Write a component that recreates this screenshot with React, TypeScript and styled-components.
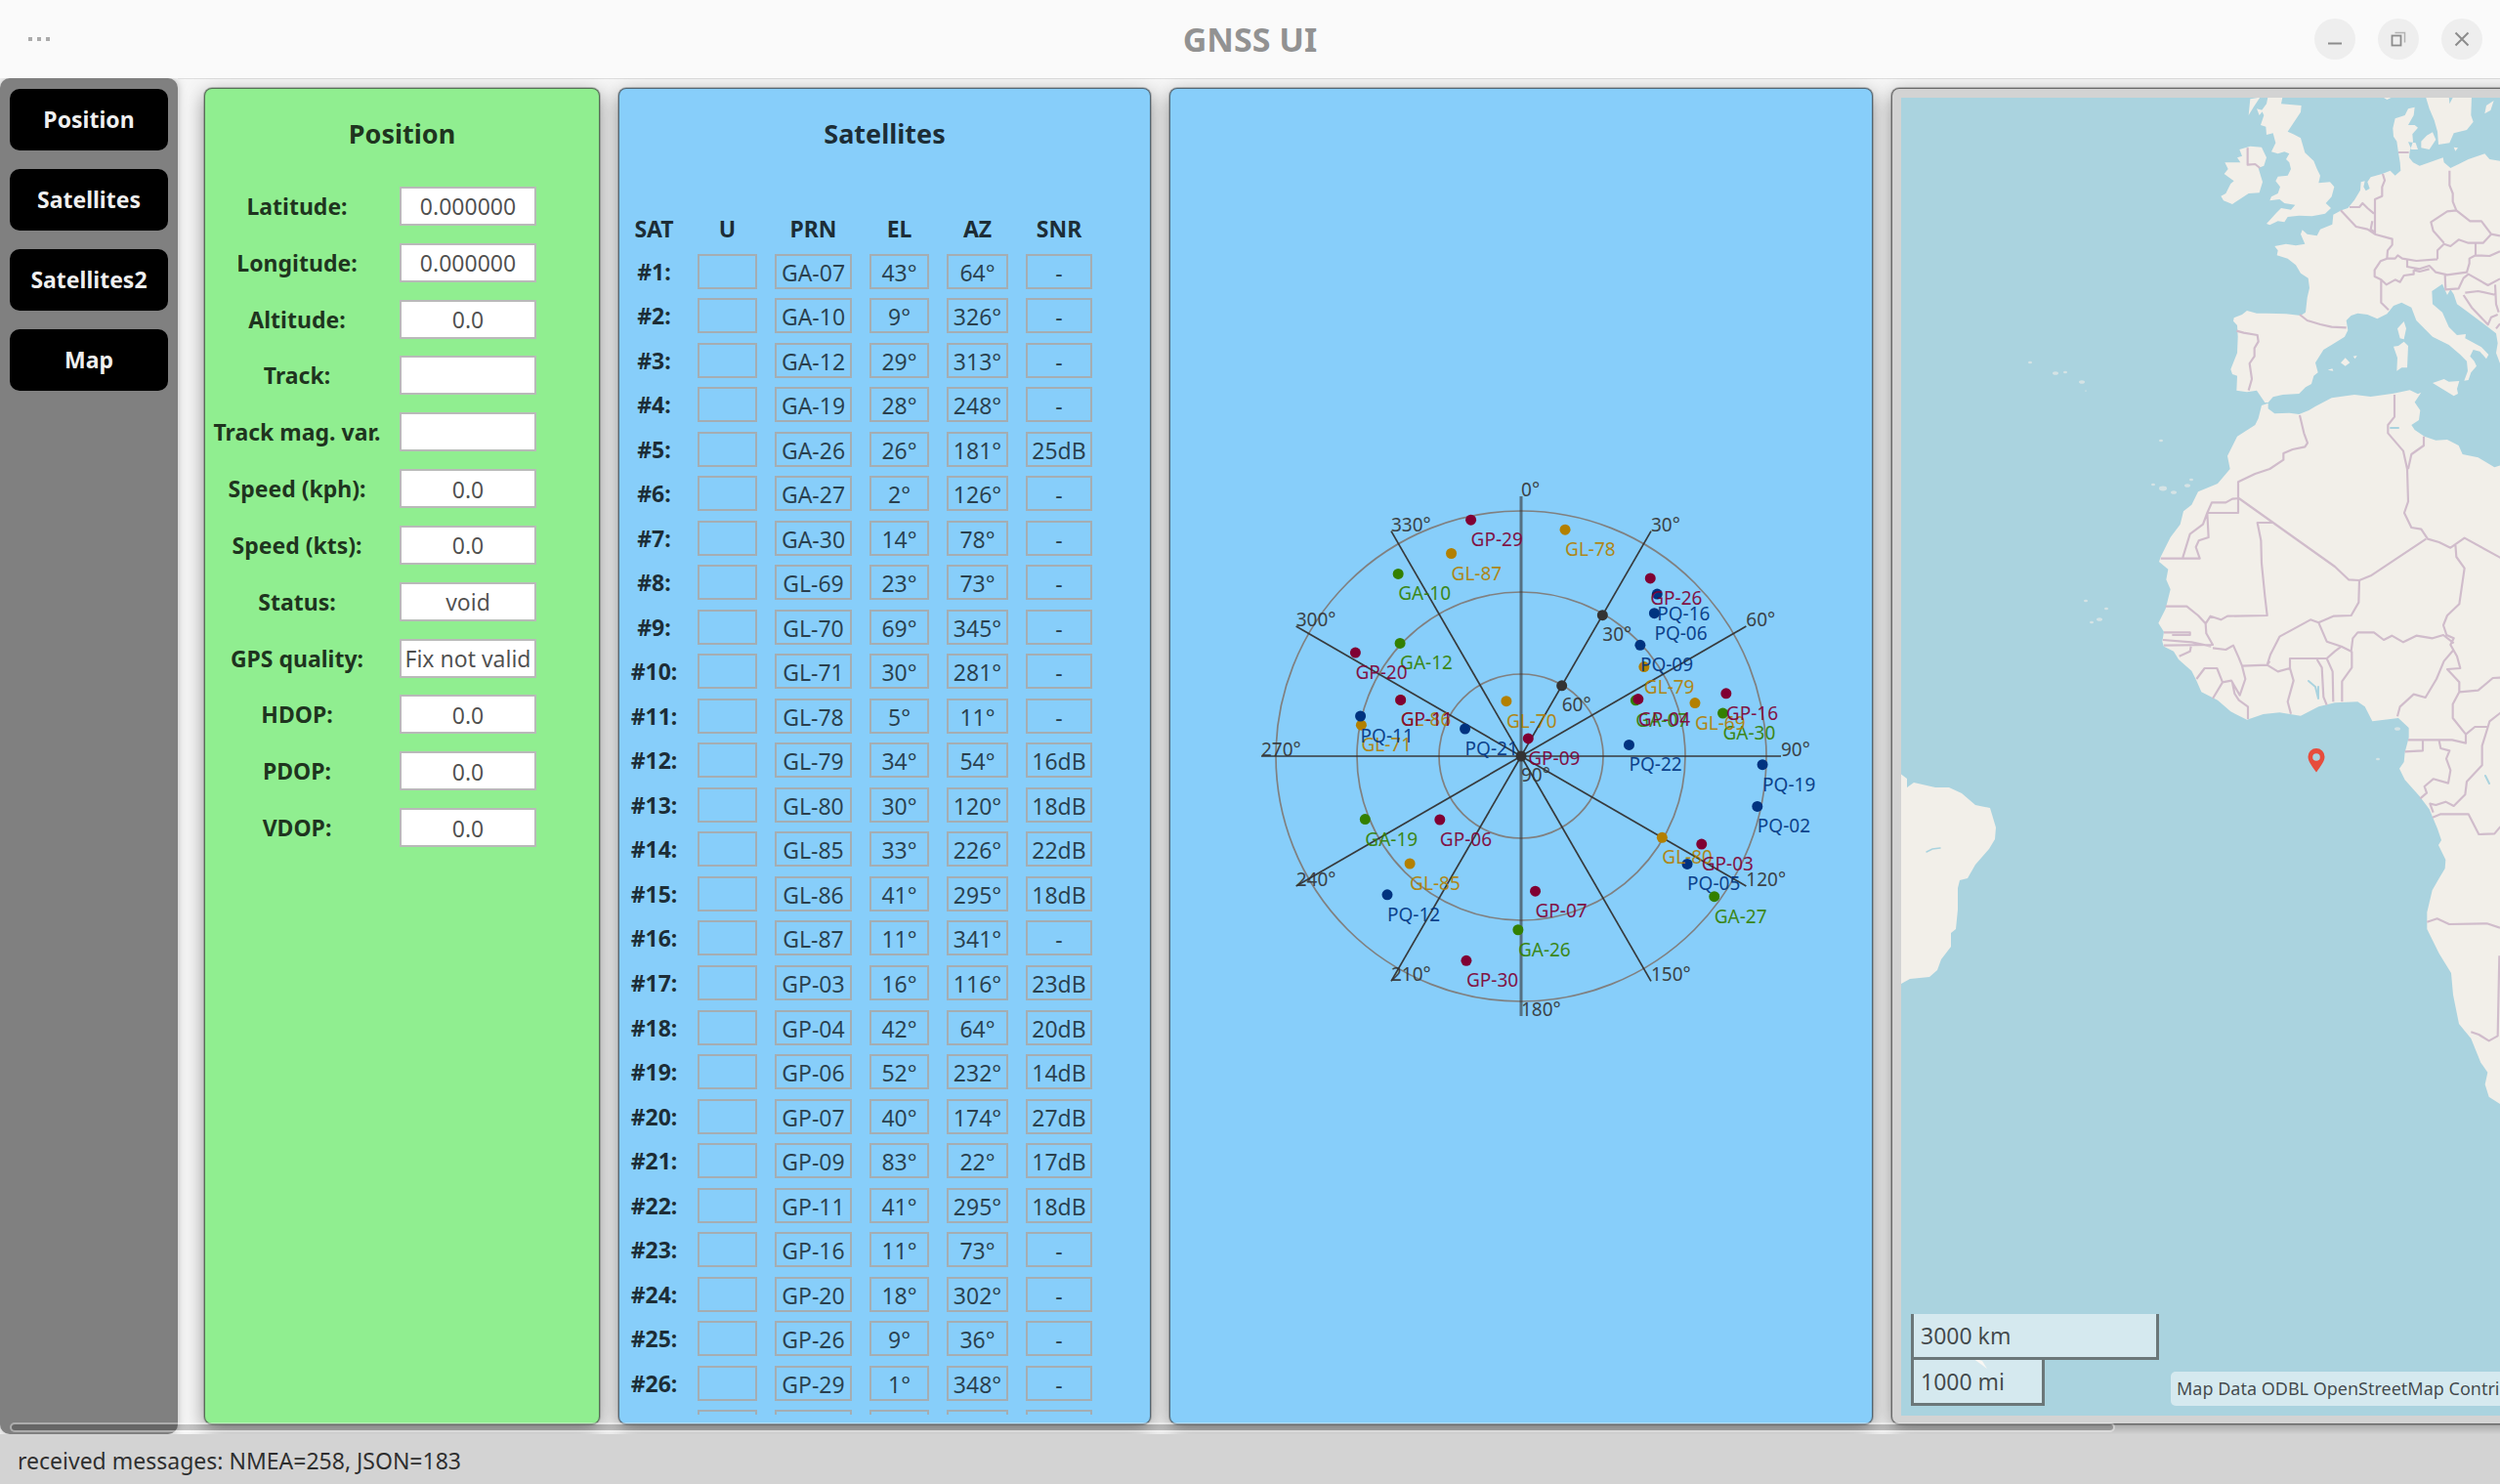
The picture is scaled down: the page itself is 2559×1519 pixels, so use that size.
import React from "react";
import styled, { createGlobalStyle, css } from "styled-components";

const GlobalStyle = createGlobalStyle`
  *, *::before, *::after { box-sizing: border-box; }
  html, body { margin: 0; padding: 0; overflow: hidden; background: #f6f6f6; }
  body, button, input { font-family: "Noto Sans", "Open Sans", sans-serif; }
`;

/* ---------- data ---------- */

type Sat = { prn: string; el: number; az: number; snr?: number };

const sat = (prn: string, el: number, az: number, snr?: number): Sat => ({ prn, el, az, snr });

const satellites: Sat[] = [
  sat("GA-07", 43, 64), sat("GA-10", 9, 326), sat("GA-12", 29, 313), sat("GA-19", 28, 248),
  sat("GA-26", 26, 181, 25), sat("GA-27", 2, 126), sat("GA-30", 14, 78),
  sat("GL-69", 23, 73), sat("GL-70", 69, 345), sat("GL-71", 30, 281), sat("GL-78", 5, 11),
  sat("GL-79", 34, 54, 16), sat("GL-80", 30, 120, 18), sat("GL-85", 33, 226, 22),
  sat("GL-86", 41, 295, 18), sat("GL-87", 11, 341),
  sat("GP-03", 16, 116, 23), sat("GP-04", 42, 64, 20), sat("GP-06", 52, 232, 14),
  sat("GP-07", 40, 174, 27), sat("GP-09", 83, 22, 17), sat("GP-11", 41, 295, 18),
  sat("GP-16", 11, 73), sat("GP-20", 18, 302), sat("GP-26", 9, 36), sat("GP-29", 1, 348),
  sat("GP-30", 12, 195),
  sat("PQ-02", 1, 102), sat("PQ-05", 17, 123), sat("PQ-06", 18, 43), sat("PQ-09", 30, 47),
  sat("PQ-11", 29, 284), sat("PQ-12", 19, 224), sat("PQ-16", 12, 40), sat("PQ-19", 1, 92),
  sat("PQ-21", 67, 296), sat("PQ-22", 50, 84),
];

const VISIBLE_ROWS = 27;

const positionFields: [string, string][] = [
  ["Latitude:", "0.000000"],
  ["Longitude:", "0.000000"],
  ["Altitude:", "0.0"],
  ["Track:", ""],
  ["Track mag. var.", ""],
  ["Speed (kph):", "0.0"],
  ["Speed (kts):", "0.0"],
  ["Status:", "void"],
  ["GPS quality:", "Fix not valid"],
  ["HDOP:", "0.0"],
  ["PDOP:", "0.0"],
  ["VDOP:", "0.0"],
];

/* ---------- window frame ---------- */

const Window = styled.div`
  display: flex;
  flex-direction: column;
  height: 100vh;
  overflow: hidden;
  color: rgba(0, 0, 0, 0.8);
  font-size: 23px;
`;

const TitleBar = styled.header`
  flex: none;
  display: grid;
  grid-template-columns: 1fr auto 1fr;
  align-items: center;
  height: 80px;
  padding: 0 18px;
  background: #fafafa;
`;

const Title = styled.h1`
  margin: 0;
  font-size: 34px;
  line-height: 40px;
  font-weight: 700;
  color: #929292;
`;

const MenuButton = styled.button`
  justify-self: start;
  display: flex;
  align-items: center;
  justify-content: center;
  width: 44px;
  height: 44px;
  padding: 0;
  border: 0;
  background: none;
`;

const WindowControls = styled.div`
  justify-self: end;
  display: flex;
  gap: 23px;
`;

const ControlButton = styled.button`
  display: flex;
  align-items: center;
  justify-content: center;
  width: 42px;
  height: 42px;
  padding: 0;
  border: 0;
  border-radius: 50%;
  background: #eeeeee;
`;

const Body = styled.main`
  position: relative;
  flex: 1;
  min-height: 0;
  display: flex;
  overflow: hidden;
  background: #f6f6f6;
`;

const StatusBar = styled.footer`
  flex: none;
  display: flex;
  align-items: center;
  height: 51px;
  padding: 2px 18px 0;
  background: #d3d3d3;
  line-height: 32px;
`;

const Sidebar = styled.nav`
  flex: none;
  display: flex;
  flex-direction: column;
  gap: 19px;
  width: 182px;
  padding: 11px 10px;
  border-radius: 10px;
  background: #808080;
  box-shadow: 0 0 10px rgba(0, 0, 0, 0.25);
`;

const NavButton = styled.button`
  height: 63px;
  padding: 0 0 2px;
  border: 0;
  border-radius: 10px;
  background: #000;
  color: rgba(255, 255, 255, 0.95);
  font-size: 23px;
  font-weight: 700;
`;

const Panels = styled.div`
  flex: 1;
  min-width: 0;
  display: flex;
  gap: 19px;
  padding: 9px 0 10px 27px;
  border-top: 1px solid #dedede;
`;

const ScrollThumb = styled.div`
  position: absolute;
  left: 10px;
  bottom: 2px;
  width: 84.2%;
  height: 10px;
  border: 2px solid rgba(255, 255, 255, 0.35);
  border-radius: 5px;
  background: rgba(0, 0, 0, 0.2);
  background-clip: padding-box;
`;

const Panel = styled.section<{ $width: number; $tone: string }>`
  flex: none;
  display: flex;
  flex-direction: column;
  width: ${(p) => p.$width}px;
  border: 1px solid rgba(60, 60, 60, 0.7);
  border-radius: 8px;
  background: ${(p) => p.$tone};
  box-shadow: 0 0 0 1px rgba(0, 0, 0, 0.2), 0 6px 20px rgba(0, 0, 0, 0.42);
`;

const PanelTitle = styled.h2`
  margin: 26px 0 0;
  font-size: 27px;
  line-height: 40px;
  font-weight: 700;
  text-align: center;
`;

/* ---------- position panel ---------- */

const FieldList = styled.div`
  display: grid;
  grid-template-columns: 174px 140px;
  column-gap: 18px;
  grid-auto-rows: 1fr;
  align-items: center;
  height: 694px;
  margin: 25px 0 0 7px;
`;

const FieldLabel = styled.label`
  font-weight: 700;
  line-height: 32px;
  text-align: center;
  white-space: nowrap;
`;

const FieldInput = styled.input`
  width: 100%;
  height: 40px;
  padding: 1px 0 0;
  border: 2px solid #b9b9b9;
  background: #fff;
  color: rgba(0, 0, 0, 0.7);
  font-size: 23px;
  text-align: center;
`;

/* ---------- satellite table ---------- */

const TableClip = styled.div`
  flex: 1;
  min-height: 0;
  margin: 55px 0 9px;
  overflow: hidden;
`;

const SatTable = styled.table`
  table-layout: fixed;
  width: 493px;
  height: 1272px;
  border-collapse: collapse;
`;

const HeadCell = styled.th<{ $width: number }>`
  width: ${(p) => p.$width}px;
  height: 43px;
  padding: 0;
  line-height: 32px;
  font-weight: 700;
`;

const RowHead = styled.th`
  padding: 0;
  line-height: 32px;
  font-weight: 700;
`;

const Cell = styled.td`
  padding: 0 9px;
`;

const CellBox = styled.div`
  height: 36px;
  border: 2px solid #a5adb2;
  color: rgba(0, 0, 0, 0.7);
  line-height: 34px;
  text-align: center;
  white-space: nowrap;
`;

/* ---------- sky plot ---------- */

const PlotArea = styled.div`
  flex: 1;
  display: flex;
  align-items: center;
  justify-content: center;
`;

const plotText = css`
  font-family: "Noto Sans", "Open Sans", sans-serif;
  font-size: 19px;
`;

const Plot = styled.svg`
  width: 640px;
  height: 600px;
  text { ${plotText} }
`;

const PLOT_RADIUS = 250;
const AXIS_LENGTH = 266;
const constellationColor: Record<string, string> = {
  GA: "#338000",
  GL: "#b38000",
  GP: "#800033",
  PQ: "#003380",
};

const polar = (radius: number, azimuth: number) => {
  const a = (azimuth * Math.PI) / 180;
  return { x: radius * Math.sin(a), y: -radius * Math.cos(a) };
};
const place = (el: number, az: number) => polar(((90 - el) / 90) * PLOT_RADIUS, az);

function SkyPlot() {
  const azimuths = Array.from({ length: 12 }, (_, i) => i * 30);
  return (
    <Plot viewBox="-320 -300 640 600" role="img" aria-label="Sky plot">
      {[84, 168, 251].map((r) => (
        <circle key={r} r={r} fill="none" stroke="#808080" strokeWidth="1.7" />
      ))}
      {azimuths.map((az) => {
        const p = polar(AXIS_LENGTH, az);
        const vertical = az % 180 === 0;
        return (
          <g key={az}>
            <line
              x2={p.x}
              y2={p.y}
              stroke="#333"
              strokeWidth={vertical ? 3 : 1.7}
              opacity={vertical ? 0.6 : 0.95}
            />
            <text x={p.x} y={p.y} fill="#333" opacity="0.9">{az}°</text>
          </g>
        );
      })}
      {[30, 60, 90].map((el) => {
        const p = place(el, 30);
        return (
          <g key={el} fill="#333">
            <circle cx={p.x} cy={p.y} r="5.5" />
            <text x={p.x} y={p.y + 26} opacity="0.9">{el}°</text>
          </g>
        );
      })}
      {satellites.map((s) => {
        const p = place(s.el, s.az);
        return <circle key={s.prn} cx={p.x} cy={p.y} r="5.5" fill={constellationColor[s.prn.slice(0, 2)]} />;
      })}
      {satellites.map((s) => {
        const p = place(s.el, s.az);
        return (
          <text key={s.prn} x={p.x} y={p.y + 27} fill={constellationColor[s.prn.slice(0, 2)]} opacity="0.9">
            {s.prn}
          </text>
        );
      })}
    </Plot>
  );
}

/* ---------- map ---------- */

const MapFrame = styled(Panel)`
  padding: 9px 9px 8px;
`;

const MapView = styled.div`
  position: relative;
  flex: 1;
  display: flex;
  align-items: flex-end;
  overflow: hidden;
  background: #aad3df;
`;

const MapDrawing = styled.svg`
  position: absolute;
  top: 0;
  left: 0;
  width: 850px;
  height: 1350px;
`;

const MapOverlay = styled.div`
  position: relative;
  display: flex;
  align-items: flex-end;
  gap: 12px;
  padding: 0 10px 10px;
`;

const Scale = styled.div`
  display: flex;
  flex-direction: column;
  align-items: flex-start;
  width: 254px;
`;

const ScaleBar = styled.div<{ $width: number }>`
  width: ${(p) => p.$width}px;
  height: 47px;
  padding: 5px 7px 0;
  border: 3px solid #6b7779;
  border-top: 0;
  background: rgba(255, 255, 255, 0.5);
  color: rgba(0, 0, 0, 0.7);
  font-size: 23px;
  line-height: 34px;
`;

const Attribution = styled.div`
  height: 35px;
  padding: 0 6px;
  border-radius: 5px;
  background: rgba(255, 255, 255, 0.5);
  color: rgba(0, 0, 0, 0.7);
  font-size: 18px;
  line-height: 35px;
  white-space: nowrap;
`;

const europeLand = [
  "M1200,200 897,200 865,195 850,178 800,195 770,210 745,222 725,205 722,190 680,205 650,215 630,205 618,190 620,170 630,140 628,118 645,98 635,90 615,90 632,60 635,35 615,40 605,60 575,70 568,100 570,125 580,140 585,175 590,205 592,230 575,245 560,230 535,240 500,250 490,265 497,285 485,292 478,280 482,262 470,265 468,290 450,320 430,345 410,352 385,365 382,395 345,410 335,430 305,425 290,412 285,425 298,455 270,460 240,455 205,462 215,475 212,490 245,500 270,520 285,545 308,560 312,590 305,620 300,665 285,675 240,670 180,668 150,668 120,660 105,672 80,682 78,692 90,705 92,740 90,790 70,840 75,855 90,860 88,905 120,910 150,905 175,942 185,942 200,925 230,918 280,915 300,895 318,885 325,860 338,850 330,820 355,780 380,765 420,740 430,720 425,690 440,675 460,668 490,672 520,685 550,670 570,645 595,635 625,650 640,690 690,740 740,765 775,795 795,815 798,845 787,875 800,873 808,850 825,830 818,815 805,800 815,780 835,785 855,808 862,795 840,772 790,745 792,732 765,735 740,710 720,665 690,640 688,600 720,578 735,612 745,595 755,610 765,640 800,665 860,710 885,730 890,760 885,790 900,830 1200,830Z",
  "M185,0 230,0 225,25 287,30 285,50 265,80 245,110 262,118 285,130 298,175 325,200 335,225 345,245 340,268 375,265 388,280 380,310 362,330 378,345 360,362 320,370 280,368 245,372 235,388 215,385 190,397 180,393 210,360 225,345 255,350 268,335 235,330 220,318 190,322 195,310 215,300 222,280 208,262 215,248 245,245 255,225 250,205 240,195 250,178 235,172 215,178 195,172 208,145 200,115 180,120 178,95 162,90 172,60 165,45 180,25Z",
  "M97,165 130,155 165,158 180,190 172,215 155,222 168,265 158,298 125,300 75,333 48,322 40,308 55,300 70,270 80,262 50,240 62,225 52,205 100,205 90,190 105,185Z",
  "M668,0 740,0 742,25 755,0 810,0 808,60 815,80 795,105 755,115 742,145 708,150 705,110 695,75 680,40Z",
  "M655,140 672,122 690,112 700,135 680,165 655,160Z",
  "M615,142 638,145 645,165 625,165Z",
  "M850,55 855,30 878,15 868,45Z",
  "M582,715 602,693 609,715 602,748 590,745Z",
  "M570,770 585,768 602,755 615,768 612,835 595,835 580,845 582,805Z",
  "M690,882 725,870 740,878 772,876 765,900 768,915 755,922Z",
  "M408,820 422,805 436,820 422,830Z",
  "M530,0 575,0 550,12Z",
  "M130,10 160,5 140,35 125,60ZM150,40 170,45 158,60Z",
  "M755,158 768,160 760,170Z",
  "M368,842 382,838 385,845ZM446,800 458,798 452,808Z",
].join("");

const europeBorders = [
  "M122,160 122,212 145,210 160,222",
  "M585,174 617,174",
  "M742,230 742,275 752,300 752,325 763,352",
  "M537,240 543,260 535,280 535,308 513,318 513,422",
  "M435,342 465,342 475,330 490,345 510,362M505,385 500,410 515,422",
  "M408,352 455,402 490,410 515,426 566,440 566,458 552,475 550,500",
  "M550,500 575,500 583,490 597,500 640,507 705,502M550,500 530,508 512,535 512,555 532,565 548,580 575,565 590,572 602,552 632,548 632,535",
  "M612,502 612,525 650,532 680,522 700,542 735,550 795,542 803,515 803,500 822,490",
  "M705,502 705,475 725,455 745,462 770,442 800,452 845,452 870,425 840,385 805,385 763,352 735,355 685,388 692,415 725,452",
  "M632,535 650,540 680,532M870,425 897,430M822,455 822,490 865,492 897,478",
  "M532,565 532,635 555,658M728,550 730,595 770,592 785,560 800,548 860,582 897,562",
  "M790,605 830,600 885,612M785,612 810,650 860,703 870,680 890,672M882,580 885,640 893,665M897,700 885,715",
  "M282,672 305,690 345,702 380,710 425,712M88,722 110,728 152,735 155,755 143,775 143,800 128,822 135,870 125,905",
].join("");

const africaLand =
  "M345,45 335,85 325,105 270,140 240,200 248,240 210,285 150,310 130,350 105,370 95,410 65,450 35,510 30,525 58,548 52,580 65,610 50,670 28,713 45,740 40,770 45,785 75,800 90,825 130,860 145,890 160,925 210,950 250,985 300,1010 350,993 400,988 465,998 520,970 570,958 640,955 662,970 685,1015 765,1005 797,1035 797,1065 785,1110 782,1140 768,1160 785,1195 830,1245 860,1285 885,1345 897,1380 888,1395 910,1440 908,1467 890,1497 869,1534 853,1601 853,1653 890,1728 927,1788 933,1855 951,1944 988,1989 1018,2063 1039,2093 1031,2130 1043,2168 1077,2190 1200,2240 1700,2240 1700,225 1090,225 1060,235 1010,205 962,195 950,168 915,150 880,152 845,140 815,120 805,105 828,90 832,60 815,35 835,5 825,10 800,-2 750,8 680,18 630,12 560,22 510,48 490,60 460,72 430,68 385,70 365,55 365,38Z";

const africaBorders = [
  "M462,75 475,130 486,160 478,172 440,180 412,192 412,212 370,240 325,255 273,280 273,375 178,375",
  "M273,330 255,332 235,343 192,343 178,375 165,410 125,440 103,512M178,375 182,450 152,460 143,480 155,515 35,515",
  "M275,330 570,540 612,580 645,582 680,568 850,455",
  "M380,405 332,405 343,460 345,530 355,630 362,690 240,692 220,703 188,692 173,715",
  "M645,582 643,650 620,690 565,692 520,712 495,703 400,755 372,810 362,842",
  "M753,12 753,80 733,105 733,130 780,185 792,240 795,340 783,375 805,420 835,425 855,455 890,465 925,482 968,452 1077,512 1200,560",
  "M843,140 843,168 805,195 795,240",
  "M940,472 943,510 968,545 952,655 915,690 903,720 913,750 935,760 925,780 945,815 955,852 915,855 952,895 952,925 1010,920 1055,882 1100,880",
  "M50,662 115,662 150,690 173,715 175,745 195,780 45,782M45,742 125,742 125,750 70,750M42,765 130,772 190,785",
  "M128,785 125,800 92,815M195,790 235,795 258,782 275,820 285,845 295,885 278,935 252,890 225,895 195,945M145,885 170,852 208,852 225,895",
  "M285,845 362,842 395,862 432,852 443,890 425,955 435,992M362,842 370,830M255,895 262,930 275,950 303,970 303,1008",
  "M432,855 432,822 545,822 570,800 590,785 545,770 520,712M515,825 530,850 535,940 545,965M545,822 563,862 565,955",
  "M590,785 620,800 625,760 640,742 690,742 720,765 745,752 780,772 820,752 870,760 903,750 935,775M622,800 622,850 592,892 592,955",
  "M935,795 905,830 882,885 848,942 812,932 770,970 762,1000",
  "M952,925 932,962 932,1005 972,1055 972,1082 930,1072 795,1072M840,1075 840,1105 785,1108M890,1075 895,1098 922,1105 912,1130 925,1165 918,1205 872,1192 845,1215 852,1235 832,1252",
  "M972,1055 1000,1032 1040,1032 1022,1090 1022,1150 975,1200 970,1240 935,1275 910,1262 880,1272 862,1268 872,1295M1040,1032 1045,1015 1077,990 1150,960",
  "M870,1310 895,1300 980,1300 1012,1362 1060,1360 1077,1340 1150,1340",
  "M853,1631 884,1621 921,1638 1037,1636 1077,1649M988,1969 1012,1977 1043,1996 1070,1981 1075,1735",
].join("");

const southAmerica =
  "M-2,691 6,697 6,706 13,701 35,706 49,706 62,712 76,724 91,727 97,747 96,759 90,769 76,785 68,799 60,801 58,809 58,831 56,851 51,855 51,869 41,882 37,893 29,900 9,902 -2,908Z";

const islets: [number, number, number][] = [
  [132, 271, 2], [158, 282, 3], [168, 281, 2], [185, 291, 3], [189, 300, 1], [266, 351, 2],
  [258, 396, 2], [268, 400, 4], [279, 404, 3], [293, 397, 3], [297, 391, 2],
  [189, 515, 2], [210, 523, 2], [203, 534, 3], [195, 537, 2], [508, 646, 3], [488, 677, 2],
];

function WorldMap() {
  return (
    <MapDrawing viewBox="0 0 850 1350" aria-hidden="true">
      <g fill="#f2efe9" stroke="none">
        <path d={europeLand} transform="translate(314 -2) scale(.33333)" />
        <path d={africaLand} transform="translate(254 300) scale(.33333)" />
        <path d={southAmerica} />
        {islets.map(([x, y, r]) => (
          <ellipse key={`${x}-${y}`} cx={x} cy={y} rx={r} ry={r * 0.6} opacity=".6" />
        ))}
        <path d="M73,1290l10,3 5,8z" />
      </g>
      <g fill="none" stroke="#d0bccb" strokeWidth="6.5" strokeLinejoin="round">
        <path d={europeBorders} transform="translate(314 -2) scale(.33333)" />
        <path d={africaBorders} transform="translate(254 300) scale(.33333)" />
      </g>
      <g fill="none" stroke="#aad3df" strokeLinecap="round">
        <path d="M417,597l7,6 3,12M427,603v12" strokeWidth="2" />
        <path d="M501,338h8" strokeWidth="2" />
        <path d="M26,772l6,-3 8,-1" strokeWidth="1.5" />
        <path d="M598,694l4,8" strokeWidth="2" />
      </g>
      <path
        d="M425,690.500C420,683.500 416.500,679 416.500,674.500a8.500,8.500 0 0 1 17,0C433.500,679 430,683.500 425,690.500ZM425,671.200a3.800,3.800 0 1 0 0,7.600a3.800,3.800 0 1 0 0,-7.600Z"
        fill="#e74c3c"
        fillRule="evenodd"
      />
    </MapDrawing>
  );
}

/* ---------- app ---------- */

const columns: [string, number][] = [
  ["SAT", 71], ["U", 79], ["PRN", 97], ["EL", 79], ["AZ", 81], ["SNR", 86],
];

export default function App() {
  return (
    <>
      <GlobalStyle />
      <Window>
        <TitleBar>
          <MenuButton aria-label="Menu">
            <svg width="24" height="4" fill="#ababab">
              <rect x="1" width="4" height="4" />
              <rect x="10" width="4" height="4" />
              <rect x="19" width="4" height="4" />
            </svg>
          </MenuButton>
          <Title>GNSS UI</Title>
          <WindowControls>
            <ControlButton aria-label="Minimize">
              <svg width="16" height="16"><path d="M1,12.500h14" stroke="#8c8c8c" strokeWidth="2" /></svg>
            </ControlButton>
            <ControlButton aria-label="Restore">
              <svg width="16" height="16" fill="none" stroke="#8c8c8c">
                <rect x="1.500" y="4.500" width="9" height="10" strokeWidth="1.800" />
                <path d="M4.500,1.500h10v10" strokeWidth="1.500" opacity=".6" />
              </svg>
            </ControlButton>
            <ControlButton aria-label="Close">
              <svg width="16" height="16"><path d="M1.500,1.500l13,13M14.500,1.500l-13,13" stroke="#8c8c8c" strokeWidth="2" /></svg>
            </ControlButton>
          </WindowControls>
        </TitleBar>

        <Body>
          <Sidebar>
            {["Position", "Satellites", "Satellites2", "Map"].map((name) => (
              <NavButton key={name}>{name}</NavButton>
            ))}
          </Sidebar>

          <Panels>
            <Panel $width={405} $tone="#90ee90">
              <PanelTitle>Position</PanelTitle>
              <FieldList>
                {positionFields.map(([label, value], i) => (
                  <React.Fragment key={label}>
                    <FieldLabel htmlFor={`field-${i}`}>{label}</FieldLabel>
                    <FieldInput id={`field-${i}`} value={value} readOnly />
                  </React.Fragment>
                ))}
              </FieldList>
            </Panel>

            <Panel $width={545} $tone="#87cefa">
              <PanelTitle>Satellites</PanelTitle>
              <TableClip>
                <SatTable>
                  <thead>
                    <tr>
                      {columns.map(([name, width]) => (
                        <HeadCell key={name} $width={width} scope="col">{name}</HeadCell>
                      ))}
                    </tr>
                  </thead>
                  <tbody>
                    {satellites.slice(0, VISIBLE_ROWS).map((s, i) => (
                      <tr key={s.prn}>
                        <RowHead scope="row">#{i + 1}:</RowHead>
                        <Cell><CellBox /></Cell>
                        <Cell><CellBox>{s.prn}</CellBox></Cell>
                        <Cell><CellBox>{s.el}°</CellBox></Cell>
                        <Cell><CellBox>{s.az}°</CellBox></Cell>
                        <Cell><CellBox>{s.snr ? `${s.snr}dB` : "-"}</CellBox></Cell>
                      </tr>
                    ))}
                  </tbody>
                </SatTable>
              </TableClip>
            </Panel>

            <Panel $width={720} $tone="#87cefa">
              <PlotArea><SkyPlot /></PlotArea>
            </Panel>

            <MapFrame $width={870} $tone="#d3d3d3">
              <MapView>
                <WorldMap />
                <MapOverlay>
                  <Scale>
                    <ScaleBar $width={254}>3000 km</ScaleBar>
                    <ScaleBar $width={137}>1000 mi</ScaleBar>
                  </Scale>
                  <Attribution>Map Data ODBL OpenStreetMap Contributors</Attribution>
                </MapOverlay>
              </MapView>
            </MapFrame>
          </Panels>
          <ScrollThumb />
        </Body>

        <StatusBar>received messages: NMEA=258, JSON=183</StatusBar>
      </Window>
    </>
  );
}
